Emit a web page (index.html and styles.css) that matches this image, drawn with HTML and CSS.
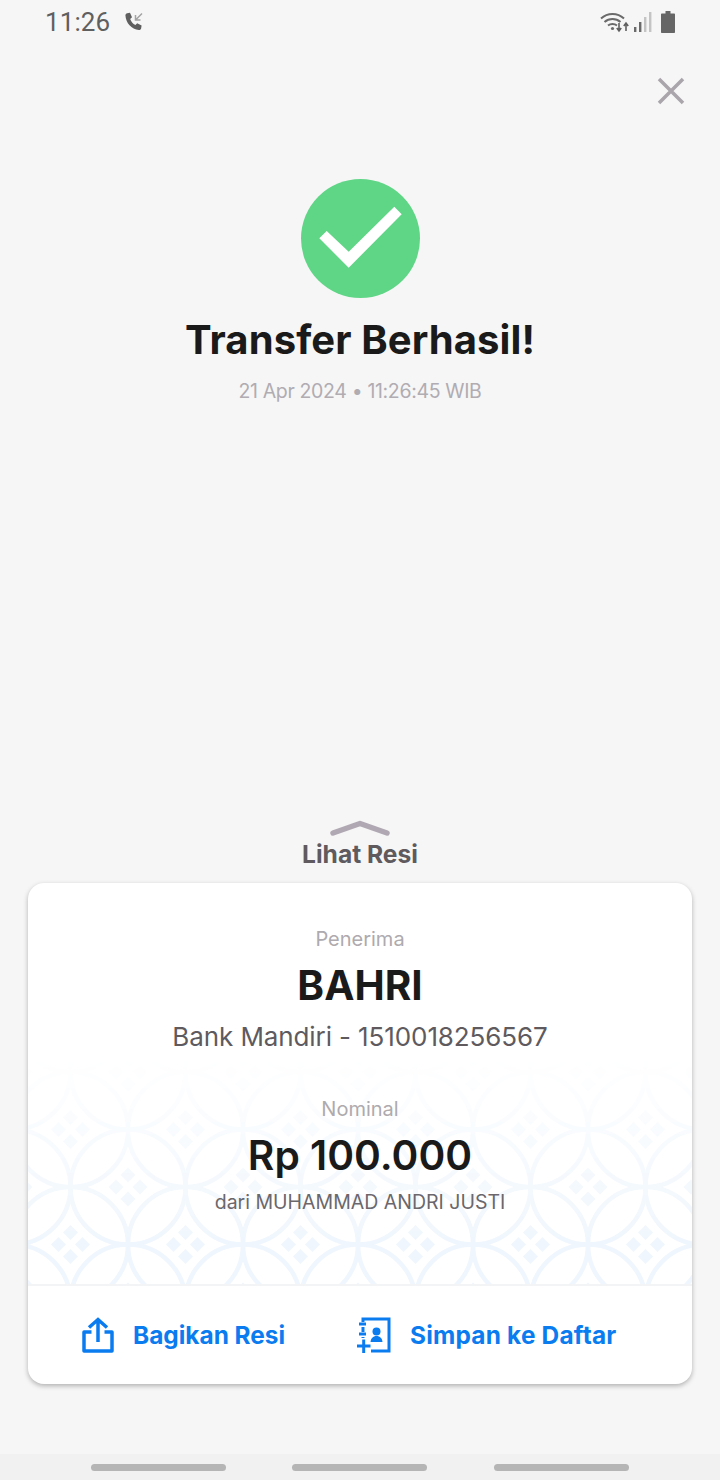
FILE: index.html
```html
<!DOCTYPE html>
<html lang="en">
<head>
  <meta charset="UTF-8" />
  <meta name="viewport" content="width=device-width, initial-scale=1.0"/>
  <title>Transfer Berhasil</title>
  <link rel="stylesheet" href="styles.css">
</head>
<body>

  <div class="status-bar">
    <div class="status-left">
      <span class="clock">11:26</span>
      <svg class="call-icon" width="20" height="20" viewBox="0 0 20 20">
        <path d="M3.200 1.200 6 .8l2 4.400-1.800 1.700c.8 2.600 2.600 4.700 5.200 6l1.800-1.600 4.400 2.200-.5 3c-.2 1-1.200 1.600-2.200 1.500C7.500 17.400 1.800 11 1.400 3.300c0-1 .8-1.900 1.800-2.100z" fill="#5f5f5f"/>
        <path d="M18 1.500 11.800 7.700M11.500 3v5h5" fill="none" stroke="#a3a3a3" stroke-width="1.500"/>
      </svg>
    </div>
    <div class="status-right">
      <svg width="30" height="22" viewBox="0 0 30 22">
        <g fill="none" stroke="#6a6a6a" stroke-width="2">
          <path d="M1 7.500C7.500 1.500 17.500 1.500 24 7.500"/>
          <path d="M4.500 11c4.500-4 11.500-4 16 0"/>
          <path d="M8 14.500c2.500-2 6.500-2 9 0"/>
        </g>
        <circle cx="12.500" cy="17.500" r="1.600" fill="#6a6a6a"/>
        <path d="M19 12v7M16.800 17l2.200 3 2.200-3M26 20v-7M23.800 15l2.200-3 2.200 3" fill="none" stroke="#5f5f5f" stroke-width="1.600"/>
      </svg>
      <svg class="signal-icon" width="18" height="22" viewBox="0 0 18 22">
        <rect x="0" y="16" width="2.400" height="5" fill="#6a6a6a"/>
        <rect x="5" y="11" width="2.400" height="10" fill="#6a6a6a"/>
        <rect x="10" y="6" width="2.400" height="15" fill="#c4c4c4"/>
        <rect x="15" y="1" width="2.400" height="20" fill="#c4c4c4"/>
      </svg>
      <svg class="battery-icon" width="14" height="22" viewBox="0 0 14 22">
        <path d="M4.500 0h5v2.500H13c.6 0 1 .4 1 1V21c0 .6-.4 1-1 1H1c-.6 0-1-.4-1-1V3.500c0-.6.4-1 1-1h3.500z" fill="#666"/>
      </svg>
    </div>
  </div>

  <div class="close-row">
    <svg width="28" height="28" viewBox="0 0 28 28">
      <path d="M2 2 26 26M26 2 2 26" stroke="#a9a5ab" stroke-width="3.500" fill="none"/>
    </svg>
  </div>

  <div class="result">
    <svg class="check" width="119" height="119" viewBox="0 0 119 119">
      <circle cx="59.500" cy="59.500" r="59.500" fill="#5fd586"/>
      <polygon points="18.300,59.300 25.700,52 47.700,72.700 93.300,27.700 100.700,35.300 47.700,88.700" fill="#fff"/>
    </svg>
    <h1>Transfer Berhasil!</h1>
    <div class="timestamp">21 Apr 2024 • 11:26:45 WIB</div>
  </div>

  <div class="receipt-toggle">
    <svg width="60" height="16" viewBox="0 0 60 16">
      <path d="M3 13 30 3.500 57 13" fill="none" stroke="#b0a9b3" stroke-width="5.500" stroke-linecap="round" stroke-linejoin="round"/>
    </svg>
    <span>Lihat Resi</span>
  </div>

  <div class="card">
    <div class="card-body">
      <svg class="batik" width="664" height="240" aria-hidden="true">
        <defs>
          <g id="cluster">
            <path d="M0-19.500l7.500 7.500-7.500 7.500-7.500-7.500z"/>
            <path d="M0 4.500l7.500 7.500-7.500 7.500-7.500-7.500z"/>
            <path d="M-12-7.500l7.500 7.500-7.500 7.500-7.500-7.500z"/>
            <path d="M12-7.500l7.500 7.500-7.500 7.500-7.500-7.500z"/>
          </g>
          <pattern id="kawung" x="-15" y="28" width="115" height="115" patternUnits="userSpaceOnUse">
            <g fill="none" stroke="#eff6fd" stroke-width="4.500">
              <circle cx="0" cy="0" r="57.500"/>
              <circle cx="115" cy="0" r="57.500"/>
              <circle cx="0" cy="115" r="57.500"/>
              <circle cx="115" cy="115" r="57.500"/>
              <circle cx="57.500" cy="57.500" r="57.500"/>
            </g>
            <g fill="#eff6fd">
              <use href="#cluster" x="57.500" y="57.500"/>
              <use href="#cluster" x="0" y="0"/>
              <use href="#cluster" x="115" y="0"/>
              <use href="#cluster" x="0" y="115"/>
              <use href="#cluster" x="115" y="115"/>
            </g>
          </pattern>
          <linearGradient id="fade" x1="0" y1="0" x2="0" y2="1">
            <stop offset="0.05" stop-color="#fff" stop-opacity="0"/>
            <stop offset="0.85" stop-color="#fff" stop-opacity="1"/>
          </linearGradient>
          <mask id="fade-mask">
            <rect width="664" height="240" fill="url(#fade)"/>
          </mask>
        </defs>
        <rect width="664" height="240" fill="url(#kawung)" mask="url(#fade-mask)"/>
      </svg>

      <div class="label">Penerima</div>
      <div class="name">BAHRI</div>
      <div class="account">Bank Mandiri - 1510018256567</div>
      <div class="label nominal-label">Nominal</div>
      <div class="amount">Rp 100.000</div>
      <div class="sender">dari MUHAMMAD ANDRI JUSTI</div>
    </div>

    <div class="card-actions">
      <div class="action">
        <svg width="32" height="36" viewBox="0 0 32 36">
          <path d="M9.500 15H2v19h28V15h-7.500" fill="none" stroke="#0a7cf0" stroke-width="3.500" stroke-linejoin="round"/>
          <path d="M16 25V3M7 10.500 16 2.500l9 8" fill="none" stroke="#0a7cf0" stroke-width="3.500"/>
        </svg>
        <span>Bagikan Resi</span>
      </div>
      <div class="action action-save">
        <svg width="34" height="36" viewBox="0 0 34 36">
          <path d="M6 5V2h26v32H14M6 10v5M6 20v1" fill="none" stroke="#0a7cf0" stroke-width="3"/>
          <path d="M2 7h7M2 17h7" fill="none" stroke="#0a7cf0" stroke-width="3"/>
          <path d="M0 29h13.500M6.700 22.500V36" fill="none" stroke="#0a7cf0" stroke-width="3"/>
          <circle cx="19.500" cy="14.500" r="4" fill="#0a7cf0"/>
          <path d="M13.500 25c.3-3.500 2.500-6 6-6s5.700 2.500 6 6z" fill="#0a7cf0"/>
        </svg>
        <span>Simpan ke Daftar</span>
      </div>
    </div>
  </div>

  <div class="nav-bar">
    <span class="nav-pill"></span>
    <span class="nav-pill"></span>
    <span class="nav-pill"></span>
  </div>

</body>
</html>
```

FILE: styles.css
```css
:root {
  --bg: #f6f6f6;
  --ink: #1a1a1a;
  --muted: #aeaaae;
  --body: #5e5a5e;
  --blue: #0a7cf0;
}

html, body {
  margin: 0;
  padding: 0;
}

body {
  display: flex;
  flex-direction: column;
  height: 1480px;
  overflow: hidden;
  background: var(--bg);
  font-family: Inter, "Noto Sans", sans-serif;
  color: var(--ink);
}

.status-bar {
  display: flex;
  justify-content: space-between;
  align-items: center;
  height: 44px;
  padding: 0 45px;
}

.status-left,
.status-right {
  display: flex;
  align-items: center;
}

.clock {
  font-family: Roboto, sans-serif;
  font-size: 26px;
  color: #5f5f5f;
  letter-spacing: 0.1px;
}

.call-icon {
  margin-left: 14px;
}

.signal-icon {
  margin-left: 4px;
}

.battery-icon {
  margin-left: 9px;
}

.close-row {
  display: flex;
  justify-content: flex-end;
  padding: 33px 35px 0 0;
}

.result {
  display: flex;
  flex-direction: column;
  align-items: center;
  padding-top: 74px;
}

h1 {
  margin: 17px 0 0;
  font-size: 40px;
  line-height: 50px;
  font-weight: 700;
  letter-spacing: 0.1px;
}

.timestamp {
  margin-top: 13px;
  font-size: 19.500px;
  line-height: 26px;
  letter-spacing: -0.35px;
  color: #b0acb2;
}

.receipt-toggle {
  display: flex;
  flex-direction: column;
  align-items: center;
  margin-top: 419px;
}

.receipt-toggle svg {
  margin-top: -3px;
}

.receipt-toggle span {
  margin-top: 3px;
  font-size: 24.600px;
  line-height: 30px;
  font-weight: 700;
  color: var(--body);
}

.card {
  margin: 14px 28px 0;
  height: 501px;
  display: flex;
  flex-direction: column;
  background: #fff;
  border-radius: 16px;
  box-shadow: 0 2px 5px rgba(0, 0, 0, 0.28);
  overflow: hidden;
}

.card-body {
  position: relative;
  flex: 1;
  display: flex;
  flex-direction: column;
  align-items: center;
  padding-top: 43px;
  border-bottom: 2px solid #f3f4f5;
}

.card-body > div {
  position: relative;
}

.batik {
  position: absolute;
  left: 0;
  bottom: 0;
}

.label {
  font-size: 20px;
  line-height: 26px;
  color: var(--muted);
}

.name {
  margin-top: 8px;
  font-size: 40.500px;
  line-height: 52px;
  font-weight: 700;
}

.account {
  margin-top: 7px;
  font-size: 26px;
  line-height: 36px;
  letter-spacing: -0.1px;
  color: var(--body);
}

.nominal-label {
  margin-top: 41px;
}

.amount {
  margin-top: 8px;
  font-size: 40.700px;
  line-height: 52px;
  font-weight: 600;
}

.sender {
  margin-top: 7px;
  font-size: 19.500px;
  line-height: 26px;
  color: #6b676b;
}

.card-actions {
  display: flex;
  align-items: center;
  gap: 72px;
  height: 98px;
  padding: 0 0 0 54px;
}

.action {
  display: flex;
  align-items: center;
  gap: 19px;
  font-size: 24.400px;
  font-weight: 700;
  color: var(--blue);
}

.action-save {
  letter-spacing: 0.2px;
}

.nav-bar {
  display: flex;
  justify-content: center;
  align-items: center;
  gap: 66.500px;
  margin-top: 70px;
  height: 26px;
  padding-right: 1px;
  background: #f1f1f1;
}

.nav-pill {
  width: 135px;
  height: 7px;
  border-radius: 4px;
  background: #b5b5b5;
}
```
